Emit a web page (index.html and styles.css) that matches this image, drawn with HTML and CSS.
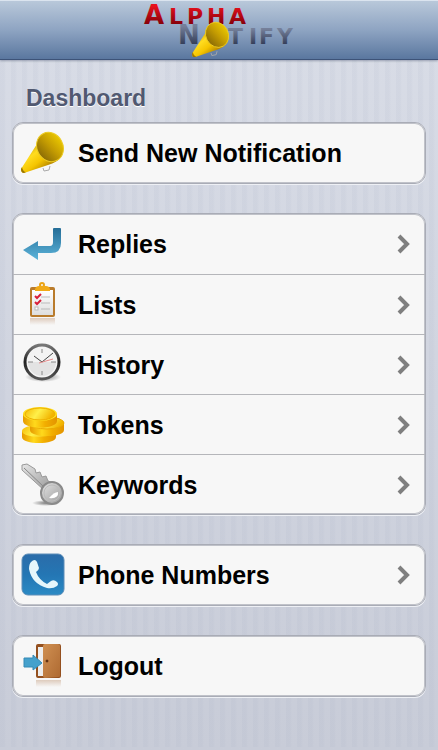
FILE: index.html
```
<!DOCTYPE html>
<html lang="en">
<head>
	<meta charset="utf-8">
	<meta name="viewport" content="width=device-width, initial-scale=1">
	<title>Alpha Notify</title>
	<link rel="stylesheet" href="styles.css">
</head>
<body>
	<!-- shared gradients and shapes -->
	<svg class="defs" aria-hidden="true">
		<defs>
			<linearGradient id="red" x1="0" y1="0" x2="0" y2="1">
				<stop offset="0.2" stop-color="#e8101c"/>
				<stop offset="0.8" stop-color="#86000a"/>
			</linearGradient>
			<linearGradient id="steel" x1="0" y1="0" x2="0" y2="1">
				<stop offset="0.2" stop-color="#75809a"/>
				<stop offset="0.8" stop-color="#353f59"/>
			</linearGradient>
			<linearGradient id="cone" x1="0.2" y1="0.2" x2="0.7" y2="0.8">
				<stop offset="0" stop-color="#b98f00"/>
				<stop offset="0.4" stop-color="#ffdc20"/>
				<stop offset="0.7" stop-color="#f5c500"/>
				<stop offset="1" stop-color="#b88a00"/>
			</linearGradient>
			<linearGradient id="mouth" x1="0" y1="0.6" x2="1" y2="0.3">
				<stop offset="0" stop-color="#8a6b05"/>
				<stop offset="0.5" stop-color="#c39b02"/>
				<stop offset="1" stop-color="#ecc900"/>
			</linearGradient>
			<linearGradient id="blue" x1="0" y1="0" x2="0" y2="1">
				<stop offset="0" stop-color="#256d97"/>
				<stop offset="1" stop-color="#5cb4da"/>
			</linearGradient>
			<linearGradient id="phone" x1="0" y1="0" x2="0" y2="1">
				<stop offset="0" stop-color="#2b6ca9"/>
				<stop offset="0.5" stop-color="#2476b4"/>
				<stop offset="1" stop-color="#2b8ac4"/>
			</linearGradient>
			<linearGradient id="gold" x1="0" y1="0" x2="1" y2="0">
				<stop offset="0" stop-color="#e69a00"/>
				<stop offset="0.35" stop-color="#ffd91c"/>
				<stop offset="0.65" stop-color="#f2ae00"/>
				<stop offset="1" stop-color="#e39400"/>
			</linearGradient>
			<linearGradient id="coin" x1="0" y1="0" x2="1" y2="0.3">
				<stop offset="0" stop-color="#f5b800"/>
				<stop offset="0.5" stop-color="#fff04a"/>
				<stop offset="1" stop-color="#f2b400"/>
			</linearGradient>
			<linearGradient id="metal" x1="0" y1="0" x2="1" y2="1">
				<stop offset="0" stop-color="#e6e6e6"/>
				<stop offset="1" stop-color="#999"/>
			</linearGradient>
			<linearGradient id="paper" x1="0" y1="0" x2="0" y2="1">
				<stop offset="0" stop-color="#fff"/>
				<stop offset="1" stop-color="#dedede"/>
			</linearGradient>
			<linearGradient id="rim" x1="0" y1="0" x2="0" y2="1">
				<stop offset="0" stop-color="#777"/>
				<stop offset="0.5" stop-color="#222"/>
				<stop offset="1" stop-color="#555"/>
			</linearGradient>
			<linearGradient id="wood" x1="0" y1="0" x2="1" y2="1">
				<stop offset="0" stop-color="#d09052"/>
				<stop offset="1" stop-color="#ae6a32"/>
			</linearGradient>
			<linearGradient id="mirror" x1="0" y1="0" x2="0" y2="1">
				<stop offset="0" stop-color="#b07a50" stop-opacity="0.35"/>
				<stop offset="1" stop-color="#b07a50" stop-opacity="0"/>
			</linearGradient>
			<radialGradient id="shade">
				<stop offset="0" stop-color="#000" stop-opacity="0.5"/>
				<stop offset="1" stop-color="#000" stop-opacity="0"/>
			</radialGradient>
			<symbol id="megaphone" viewBox="0 0 44 44">
				<path d="M22 37l1 3 5-1 1-4" fill="none" stroke="#aaa" stroke-width="1"/>
				<path d="M16 13C18 6 24 2 31 3l10 21c-3 6-8 8-14 10L3 42q-3 0-3-4z" fill="url(#cone)"/>
				<path d="M0 38q0 4 3 4l2-1q-3 0-4-5z" fill="#9a7503"/>
				<ellipse cx="29" cy="16" rx="13" ry="15" transform="rotate(-28 29 16)" fill="url(#mouth)" stroke="#eccb24"/>
			</symbol>
		</defs>
	</svg>

	<header class="topbar">
		<svg class="logo" viewBox="0 0 156 56" role="img" aria-label="Alpha Notify">
			<text class="logo-small" x="3 28 46 66 88" y="23" fill="url(#red)"><tspan class="logo-big">A</tspan>LPHA</text>
			<text class="logo-big" x="37" y="43" fill="url(#steel)">N</text>
			<text class="logo-small" x="87 108 118 136" y="43" fill="url(#steel)">TIFY</text>
			<use href="#megaphone" x="51" y="20" width="38" height="38"/>
		</svg>
	</header>

	<main class="page">
		<h1>Dashboard</h1>

		<ul class="card">
			<li><a class="row" href="#send">
				<svg class="icon" viewBox="0 0 44 44"><use href="#megaphone" width="44" height="44"/></svg>
				<span class="label">Send New Notification</span>
			</a></li>
		</ul>

		<ul class="card">
			<li><a class="row" href="#replies">
				<svg class="icon" viewBox="0 0 44 44">
					<path d="M33 6h6q1 0 1 1v14q0 10-10 10H17v7L2 28l15-9v5h12q3 0 3-4V7q0-1 1-1z" fill="url(#blue)"/>
				</svg>
				<span class="label">Replies</span>
				<svg class="arrow" viewBox="0 0 14 20"><path d="M2 2l8 8-8 8"/></svg>
			</a></li>
			<li><a class="row" href="#lists">
				<svg class="icon" viewBox="0 0 44 44">
					<rect x="9" y="35" width="25" height="7" fill="url(#mirror)"/>
					<rect x="9" y="4" width="25" height="30" rx="2" fill="#b97b2c"/>
					<rect x="11" y="7" width="21" height="25" fill="url(#paper)"/>
					<circle cx="21" cy="2" r="2" fill="none" stroke="#eaa315" stroke-width="2"/>
					<path d="M14 8V6q1-3 4-3h7q3 0 4 3v2z" fill="#f1aa16"/>
					<path d="M20 14h9M20 20h9M20 26h9" stroke="#bbb"/>
					<path d="M14 13l2 2 4-4M14 19l2 2 4-4" fill="none" stroke="#d9203a" stroke-width="2"/>
					<rect x="14" y="24" width="3" height="3" fill="#fff" stroke="#bbb"/>
				</svg>
				<span class="label">Lists</span>
				<svg class="arrow" viewBox="0 0 14 20"><path d="M2 2l8 8-8 8"/></svg>
			</a></li>
			<li><a class="row" href="#history">
				<svg class="icon" viewBox="0 0 44 44">
					<ellipse cx="22" cy="34" rx="18" ry="5" fill="url(#shade)"/>
					<circle cx="21" cy="19" r="17" fill="#f3f3f3" stroke="url(#rim)" stroke-width="3"/>
					<path d="M7 19a14 14 0 0 0 28 0z" fill="#e3e3e3"/>
					<path d="M21 6v4M21 28v4M7 19h5M30 19h5" stroke="#888"/>
					<path d="M13 13l8 6 11-9" fill="none" stroke="#444"/>
					<path d="M18 20l14-4" stroke="#e58a8a"/>
				</svg>
				<span class="label">History</span>
				<svg class="arrow" viewBox="0 0 14 20"><path d="M2 2l8 8-8 8"/></svg>
			</a></li>
			<li><a class="row" href="#tokens">
				<svg class="icon" viewBox="0 0 44 44">
					<path d="M1 28v6c0 8 34 8 34 0v-6z" fill="url(#gold)"/>
					<ellipse cx="18" cy="28" rx="17" ry="6" fill="url(#coin)"/>
					<path d="M9 20v7c0 8 34 8 34 0v-7z" fill="url(#gold)"/>
					<ellipse cx="26" cy="20" rx="17" ry="6" fill="url(#coin)" stroke="#e9a900"/>
					<path d="M2 11v7c0 9 34 9 34 0v-7z" fill="url(#gold)"/>
					<ellipse cx="19" cy="11" rx="17" ry="7" fill="#ffdf20"/>
					<ellipse cx="19" cy="11" rx="15" ry="6" fill="url(#coin)" stroke="#eeb000"/>
				</svg>
				<span class="label">Tokens</span>
				<svg class="arrow" viewBox="0 0 14 20"><path d="M2 2l8 8-8 8"/></svg>
			</a></li>
			<li><a class="row" href="#keywords">
				<svg class="icon" viewBox="0 0 44 44">
					<ellipse cx="25" cy="40" rx="14" ry="3" fill="url(#shade)"/>
					<path d="M1 2l5-1 8 5 1 4 4-1 2 5 4-1 2 5 3 1-6 9L1 7z" fill="url(#metal)" stroke="#999"/>
					<path d="M3 5l21 20" stroke="#888" stroke-width="1"/>
					<circle cx="31" cy="30" r="11" fill="url(#metal)" stroke="#8a8a8a" stroke-width="2"/>
					<circle cx="31" cy="30" r="8" fill="none" stroke="#bcbcbc"/>
					<path d="M28 35q5-6 9-6 1 7-9 6z" fill="#fff"/>
				</svg>
				<span class="label">Keywords</span>
				<svg class="arrow" viewBox="0 0 14 20"><path d="M2 2l8 8-8 8"/></svg>
			</a></li>
		</ul>

		<ul class="card">
			<li><a class="row" href="#phone-numbers">
				<svg class="icon" viewBox="0 0 44 44">
					<rect x="1" y="1" width="42" height="41" rx="6" fill="url(#phone)" stroke="#5c8db8"/>
					<path d="M10 9q4-4 6 0l2 6q0 2-3 4 3 8 11 12l4-3q3-2 6 1 2 2 0 4-4 3-10 2Q11 31 8 16q0-5 2-7z" fill="#e6f6fb"/>
				</svg>
				<span class="label">Phone Numbers</span>
				<svg class="arrow" viewBox="0 0 14 20"><path d="M2 2l8 8-8 8"/></svg>
			</a></li>
		</ul>

		<ul class="card">
			<li><a class="row" href="#logout">
				<svg class="icon" viewBox="0 0 44 44">
					<rect x="15" y="36" width="25" height="7" fill="url(#mirror)"/>
					<rect x="15" y="0" width="25" height="34" rx="2" fill="#94501f"/>
					<path d="M17 3h6v29h-6z" fill="#eee"/>
					<path d="M22 2q0-2 2-2h13q2 0 2 2v30q0 1-2 1l-13 1q-2 0-2-2z" fill="url(#wood)"/>
					<circle cx="26" cy="17" r="1" fill="#5c2c10" stroke="#5c2c10"/>
					<path d="M3 14h9v-3l9 8-9 7v-3H3z" fill="#45a1cc" stroke="#358ab5"/>
				</svg>
				<span class="label">Logout</span>
			</a></li>
		</ul>
	</main>
</body>
</html>
```
FILE: styles.css
```
html,body{
	min-height: 100%;
}
html{
	background: linear-gradient(#d9dde7, #c8ccd8);
}
body{
	margin: 0;
	font-family: "Liberation Sans", Arial, sans-serif;
	background: repeating-linear-gradient(to right, rgba(150,160,185,0.08) 0, rgba(150,160,185,0.08) 4px, transparent 6px, transparent 11px);
}
.defs{
	position: absolute;
	width: 0;
	height: 0;
}
.topbar{
	height: 60px;
	box-sizing: border-box;
	display: flex;
	justify-content: center;
	border-top: 1px solid #dbe4ef;
	border-bottom: 1px solid #3d5378;
	background: linear-gradient(#b9c8da, #8ea4c2 50%, #5a779f);
	box-shadow: 0 1px 2px rgba(60,70,100,0.4);
}
.logo{
	width: 156px;
	height: 56px;
}
.logo text{
	font-family: "DejaVu Sans", sans-serif;
	font-weight: bold;
}
.logo .logo-big{
	font-size: 26px;
}
.logo .logo-small{
	font-size: 22px;
}
.page{
	padding: 24px 12px 50px;
}
h1{
	margin: 0 0 10px 14px;
	font-size: 23px;
	line-height: 28px;
	color: #515971;
	text-shadow: 0 1px 0 #fff;
}
.card{
	margin: 0 0 29px;
	padding: 0;
	list-style: none;
	border: 1px solid #a9acb6;
	border-radius: 11px;
	background: #f7f7f7;
	box-shadow: inset 0 0 0 1px #c0c2c9, 0 1px 0 #eef0f5;
}
.card:last-child{
	margin-bottom: 0;
}
.card li + li{
	border-top: 1px solid #b5b6ba;
}
.row{
	display: flex;
	align-items: center;
	height: 60px;
	padding: 0 14px 0 8px;
	color: #000;
	text-decoration: none;
}
.card li + li .row{
	height: 59px;
}
.icon{
	width: 44px;
	height: 44px;
	margin-right: 13px;
	overflow: visible;
}
.label{
	flex: 1;
	font-size: 25px;
	line-height: 28px;
	font-weight: bold;
}
.arrow{
	width: 14px;
	height: 20px;
	fill: none;
	stroke: #7f7f7f;
	stroke-width: 4px;
}
```
